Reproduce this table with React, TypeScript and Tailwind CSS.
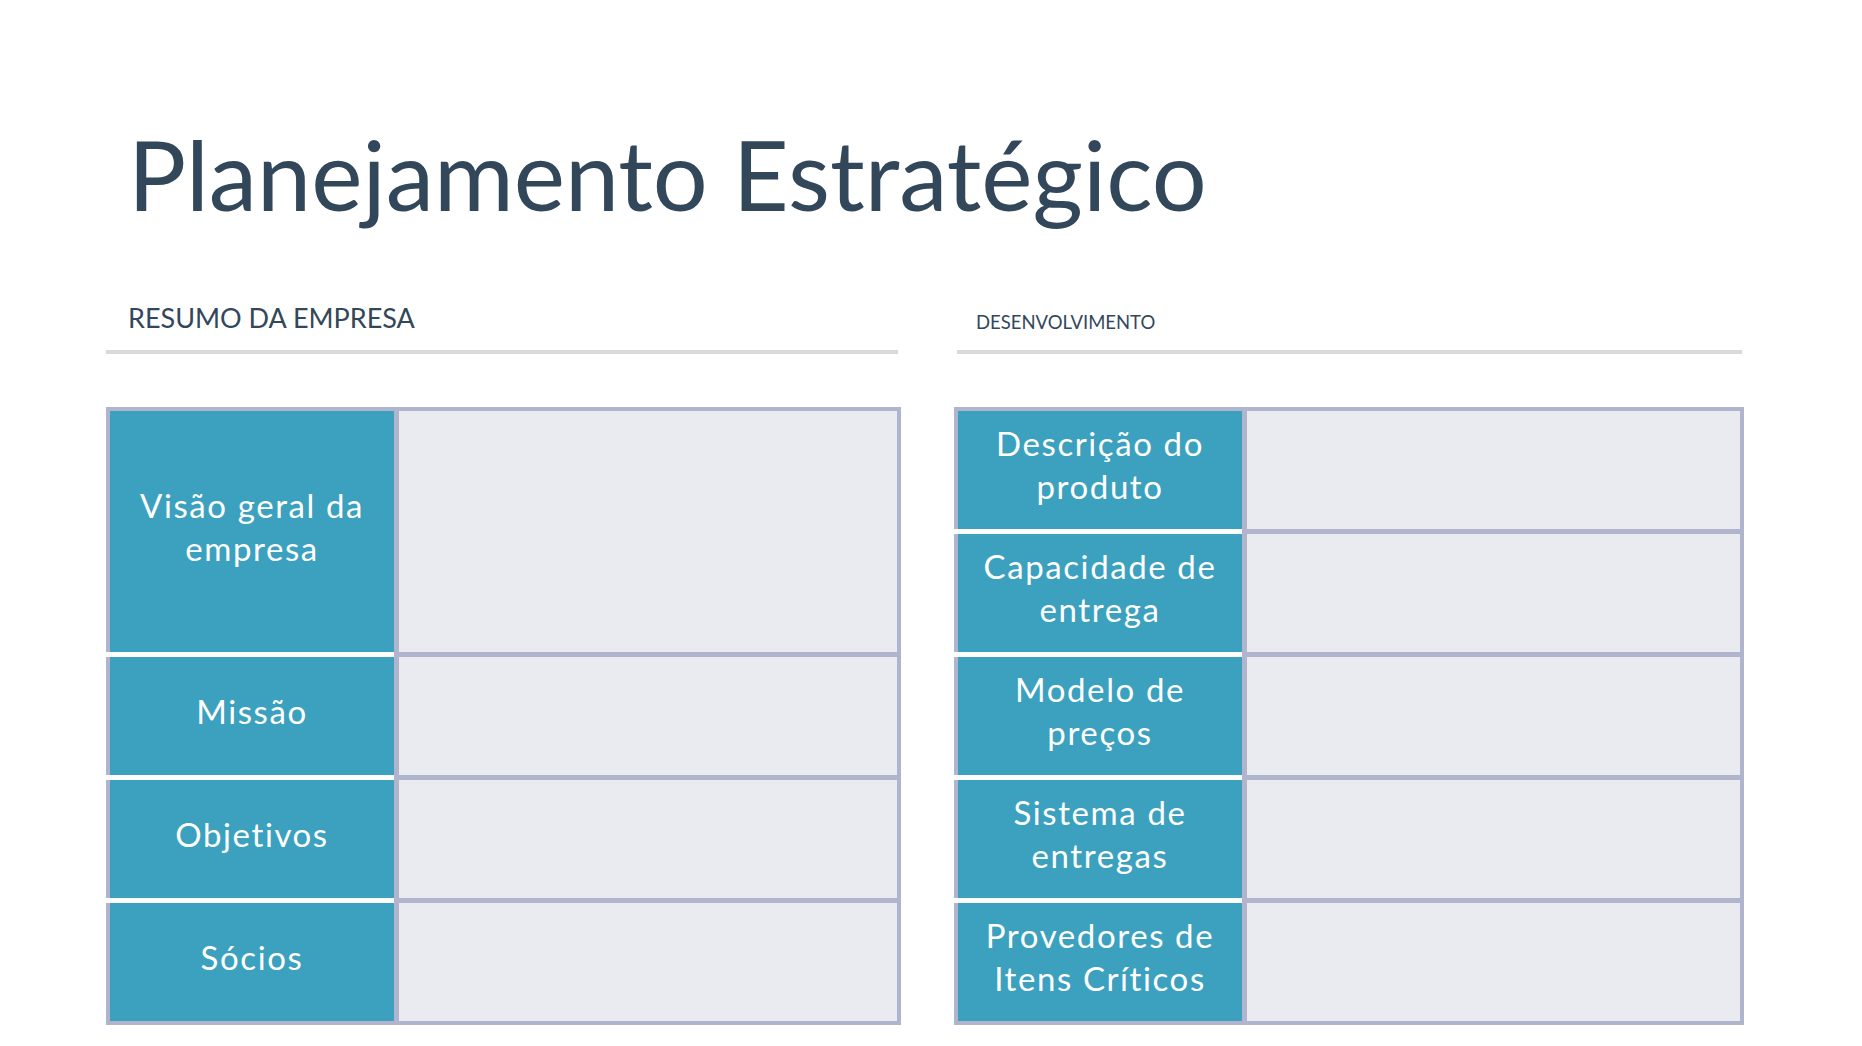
import React from 'react';

// ===== Data =====
const resumoRows = [
    { lines: ['Visão geral da', 'empresa'], span: 2 },
    { lines: ['Missão'], span: 1 },
    { lines: ['Objetivos'], span: 1 },
    { lines: ['Sócios'], span: 1 },
];

const desenvolvimentoRows = [
    { lines: ['Descrição do', 'produto'], span: 1 },
    { lines: ['Capacidade de', 'entrega'], span: 1 },
    { lines: ['Modelo de', 'preços'], span: 1 },
    { lines: ['Sistema de', 'entregas'], span: 1 },
    { lines: ['Provedores de', 'Itens Críticos'], span: 1 },
];

type Row = { lines: string[]; span: number };

// ===== Table =====
const PlanTable = ({ rows, width }: { rows: Row[]; width: string }) => {
    return (
        <div className={`flex ${width}`}>
            {/* label column: white gaps between teal cells */}
            <div className="w-[288px] shrink-0 flex flex-col gap-[5px] bg-white border-y-[4px] border-[#b0b5cd]">
                {rows.map((row, i) => (
                    <div
                        key={i}
                        className={`bg-[#3ba1bf] border-l-[4px] border-[#b0b5cd] pb-[10px] flex flex-col items-center justify-center text-white text-[33px] tracking-[1.6px] leading-[43px] text-center ${
                            row.span === 2 ? 'h-[241px]' : 'h-[118px]'
                        }`}
                    >
                        {row.lines.map((line) => (
                            <span key={line}>{line}</span>
                        ))}
                    </div>
                ))}
            </div>

            {/* content column: grey gaps between light cells */}
            <div className="flex-1 flex flex-col gap-[5px] bg-[#b0b5cd] border-[4px] border-l-[5px] border-[#b0b5cd]">
                {rows.map((row, i) => (
                    <div
                        key={i}
                        className={`bg-[#eaebf1] ${row.span === 2 ? 'h-[241px]' : 'h-[118px]'}`}
                    />
                ))}
            </div>
        </div>
    );
};

// ===== Page =====
const App = () => {
    return (
        <div className="w-full min-h-screen bg-white text-[#33475b] font-['Lato',sans-serif]">
            <div className="pl-[106px] pt-[125px]">
                <h1 className="ml-[22px] text-[97px] leading-none font-normal">Planejamento Estratégico</h1>

                <div className="flex gap-[53px] mt-[82px]">
                    {/* Resumo da empresa */}
                    <section className="w-[795px]">
                        <div className="h-[46px] pl-[22px]">
                            <h2 className="text-[27px] leading-none">RESUMO DA EMPRESA</h2>
                        </div>
                        <div className="w-[792px] h-[4px] bg-[#d9d9d9]" />
                        <div className="mt-[53px]">
                            <PlanTable rows={resumoRows} width="w-[795px]" />
                        </div>
                    </section>

                    {/* Desenvolvimento */}
                    <section className="w-[790px]">
                        <div className="h-[46px] pl-[22px] pt-[9px]">
                            <h2 className="text-[18.5px] leading-none">DESENVOLVIMENTO</h2>
                        </div>
                        <div className="ml-[3px] w-[785px] h-[4px] bg-[#d9d9d9]" />
                        <div className="mt-[53px]">
                            <PlanTable rows={desenvolvimentoRows} width="w-[790px]" />
                        </div>
                    </section>
                </div>
            </div>
        </div>
    );
};

export default App;
